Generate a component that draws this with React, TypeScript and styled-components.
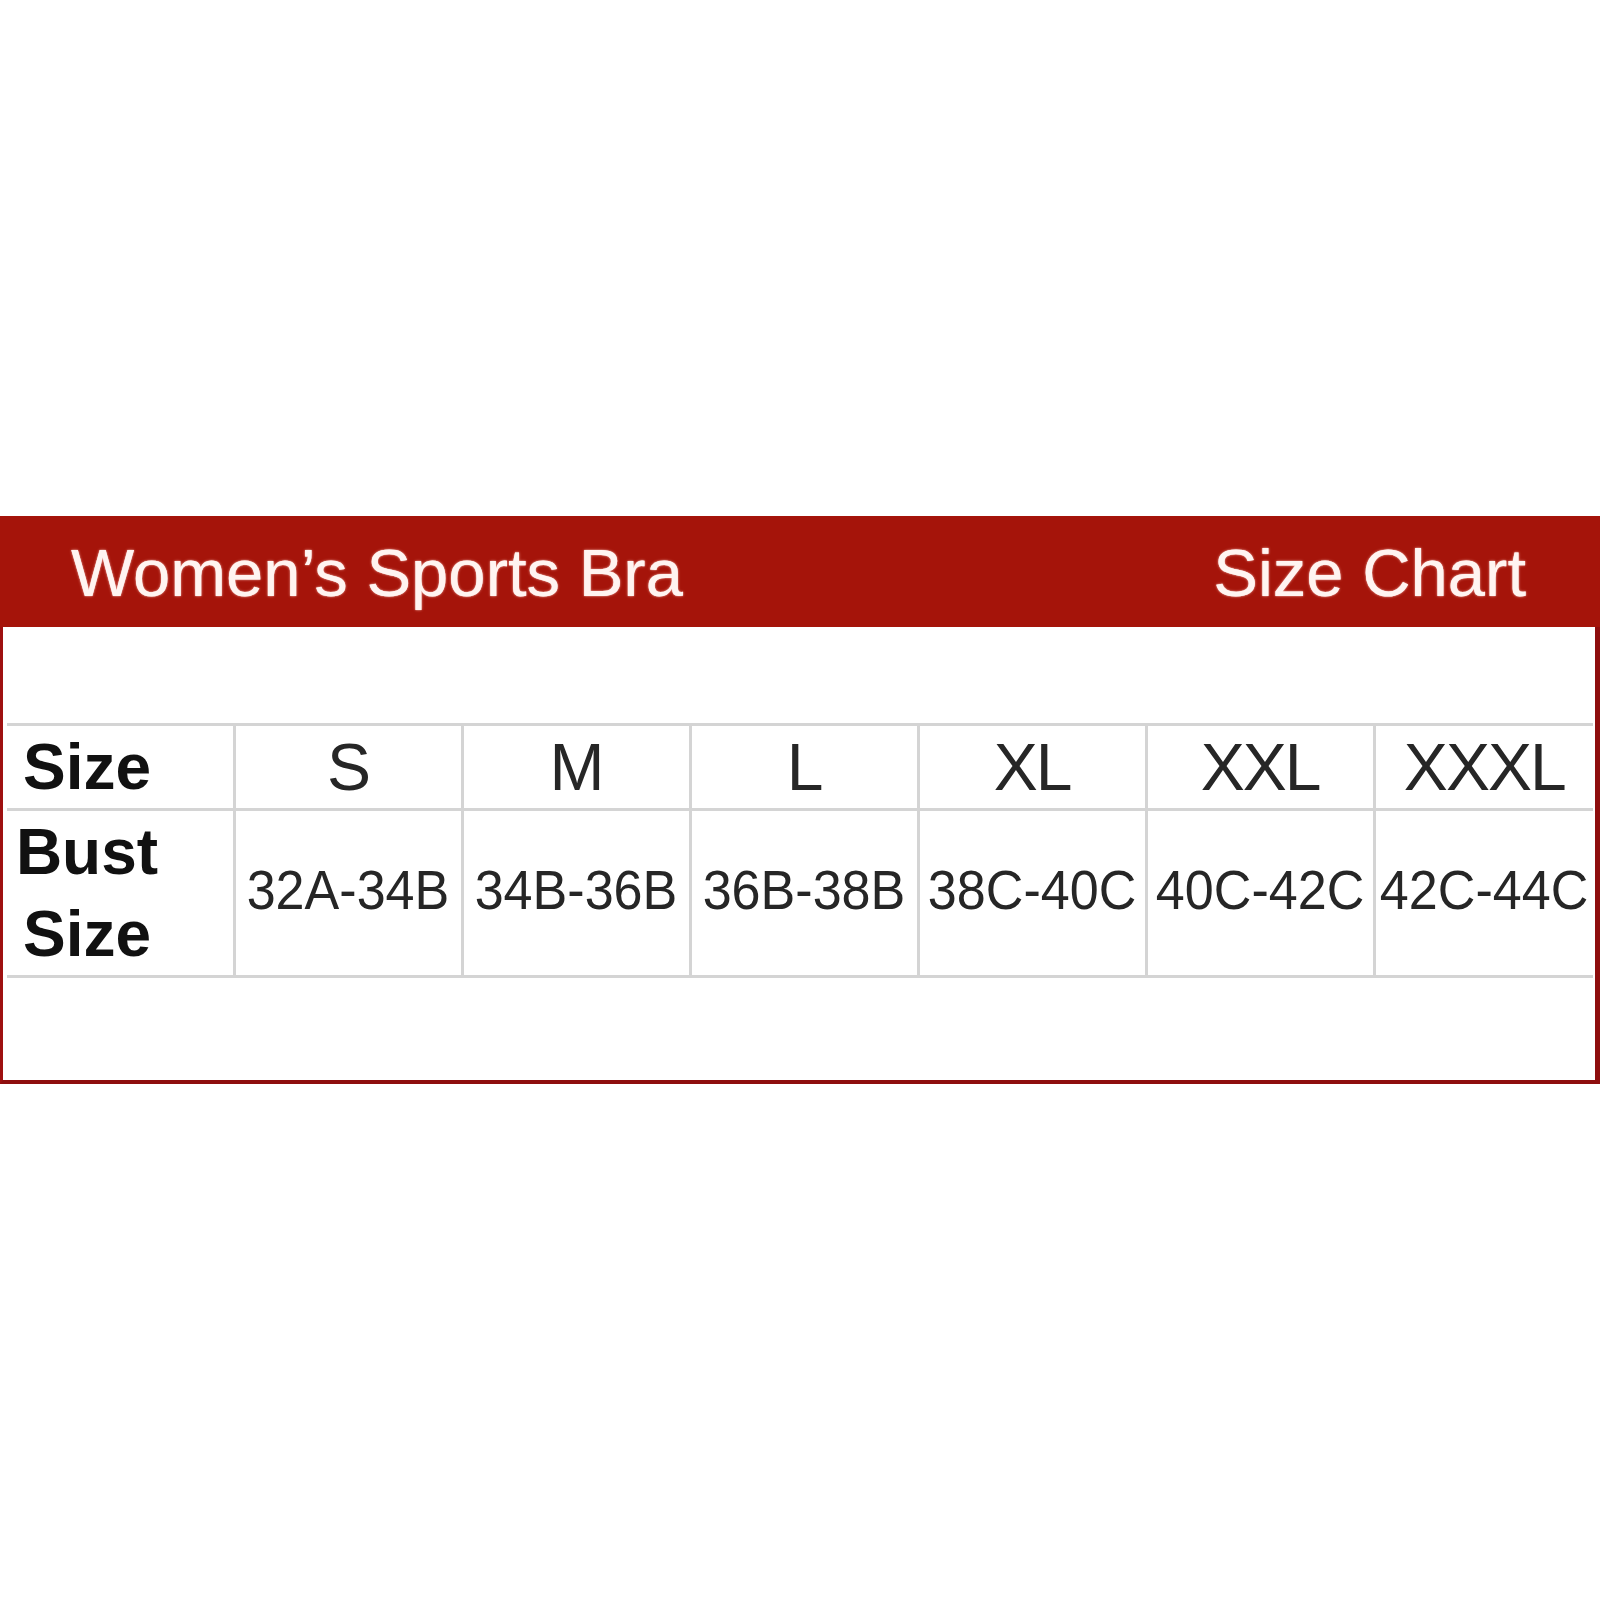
import React from "react";
import styled, { createGlobalStyle } from "styled-components";

const Global = createGlobalStyle`
  html, body { margin: 0; padding: 0; background: #ffffff; }
  body { font-family: "Liberation Sans", Arial, sans-serif; }
`;

const Page = styled.div`
  width: 1600px;
  height: 1600px;
  padding-top: 516px;
  box-sizing: border-box;
  background: #ffffff;
`;

const Chart = styled.section`
  width: 1600px;
  display: flex;
  flex-direction: column;
`;

const Banner = styled.header`
  height: 111px;
  background: #a5140a;
  display: flex;
  align-items: center;
  justify-content: space-between;
  padding: 0 74px 0 71px;
  box-sizing: border-box;
`;

const BannerText = styled.h1`
  margin: 0;
  font-family: "Liberation Sans", Arial, sans-serif;
  font-weight: 400;
  font-size: 67px;
  line-height: 1;
  color: #fff4f1;
  text-shadow: 0 0 1px #ffe6e0, 0 0 3px rgba(255, 190, 180, 0.7);
  padding-top: 2px;
`;

const Body = styled.div`
  height: 457px;
  box-sizing: border-box;
  border-left: 3px solid #9e1010;
  border-right: 5px solid #8e0e0e;
  border-bottom: 4px solid #8e0e0e;
  padding: 96px 2px 0 4px;
  background: #ffffff;
`;

const Table = styled.table`
  border-collapse: collapse;
  table-layout: fixed;
  width: 1586px;
`;

const Row = styled.tr<{ $h: number }>`
  height: ${(p) => p.$h}px;
`;

const Cell = styled.td<{ $last?: boolean; $data?: boolean }>`
  padding: 0 0 ${(p) => (p.$data ? "8px" : "0")} 0;
  border-top: 3px solid #d4d4d4;
  border-bottom: 3px solid #d4d4d4;
  border-left: 3px solid #d4d4d4;
  border-right: ${(p) => (p.$last ? "none" : "3px solid #d4d4d4")};
  text-align: center;
  vertical-align: middle;
  font-family: "Liberation Sans", Arial, sans-serif;
  color: #262626;
  font-weight: 400;
  font-size: ${(p) => (p.$data ? "56px" : "66px")};
  letter-spacing: ${(p) => (p.$data ? "0" : "-2px")};
  white-space: nowrap;
  overflow: hidden;
`;

const Narrow = styled.span`
  display: inline-block;
  transform: scaleX(0.93);
  transform-origin: center;
  margin: 0 -30px;
`;

const LabelCell = styled.th`
  padding: 0 0 0 7px;
  border-top: 3px solid #d4d4d4;
  border-bottom: 3px solid #d4d4d4;
  border-right: 3px solid #d4d4d4;
  text-align: left;
  vertical-align: middle;
`;

const Label = styled.div`
  display: inline-block;
  width: 146px;
  text-align: center;
  font-family: "Liberation Sans", Arial, sans-serif;
  font-weight: 700;
  font-size: 64px;
  line-height: 82px;
  color: #111111;
`;

const sizes = ["S", "M", "L", "XL", "XXL", "XXXL"];
const busts = ["32A-34B", "34B-36B", "36B-38B", "38C-40C", "40C-42C", "42C-44C"];
const widths = [227, 228, 228, 228, 228, 228, 219];

export default function App() {
  return (
    <>
      <Global />
      <Page>
        <Chart>
          <Banner>
            <BannerText>Women’s Sports Bra</BannerText>
            <BannerText>Size Chart</BannerText>
          </Banner>
          <Body>
            <Table>
              <colgroup>
                {widths.map((w, i) => (
                  <col key={i} style={{ width: w }} />
                ))}
              </colgroup>
              <tbody>
                <Row $h={83}>
                  <LabelCell>
                    <Label>Size</Label>
                  </LabelCell>
                  {sizes.map((s, i) => (
                    <Cell key={s} $last={i === sizes.length - 1}>
                      {s}
                    </Cell>
                  ))}
                </Row>
                <Row $h={167}>
                  <LabelCell>
                    <Label>
                      Bust
                      <br />
                      Size
                    </Label>
                  </LabelCell>
                  {busts.map((b, i) => (
                    <Cell key={b} $data $last={i === busts.length - 1}>
                      <Narrow>{b}</Narrow>
                    </Cell>
                  ))}
                </Row>
              </tbody>
            </Table>
          </Body>
        </Chart>
      </Page>
    </>
  );
}
